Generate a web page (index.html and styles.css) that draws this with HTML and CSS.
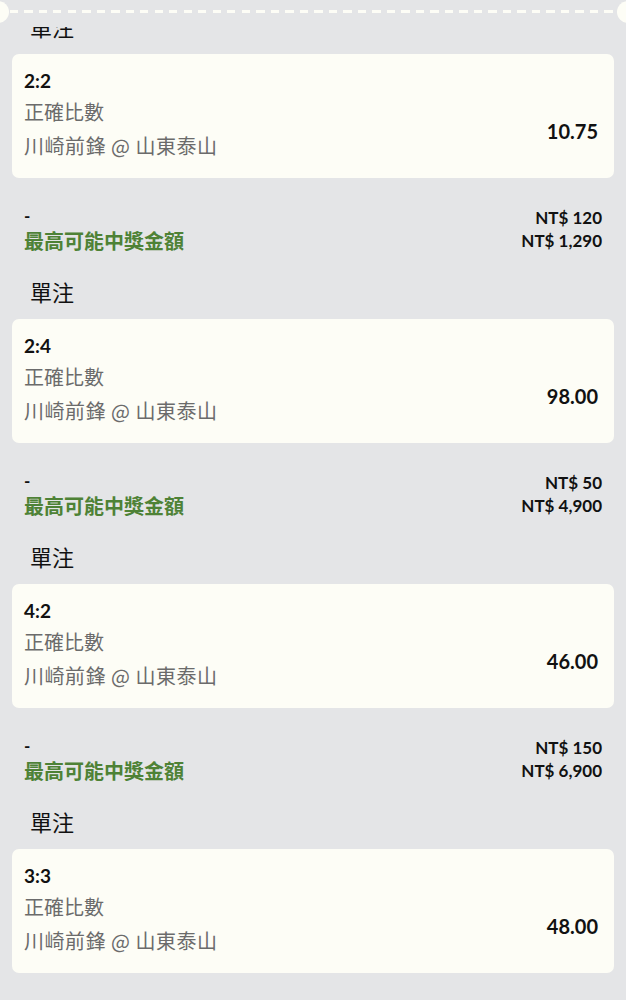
FILE: index.html
```html
<html lang="zh-Hant">
<head>
    <meta charset="UTF-8">
    <meta name="viewport" content="width=device-width, initial-scale=1.0">
    <title>投注單</title>
    <link rel="stylesheet" href="styles.css">
</head>
<body>

<div class="ticket_top">
  <span class="notch notch-left"></span>
  <span class="dash_line"></span>
  <span class="notch notch-right"></span>
</div>

<section class="slip_">
  <div class="bet_type">單注</div>

  <div class="bet-card">
    <div class="score">2:2</div>
    <div class="bet_row">
      <div class="bet_info">
        <div class="market">正確比數</div>
        <div class="teams">川崎前鋒 @ 山東泰山</div>
      </div>
      <div class="odds">10.75</div>
    </div>
  </div>
  <div class="summary">
    <div class="sum_row"><span class="dash">-</span><span class="amount">NT$ 120</span></div>
    <div class="sum_row"><span class="win_label">最高可能中獎金額</span><span class="amount">NT$ 1,290</span></div>
  </div>
  <div class="bet_type">單注</div>

  <div class="bet-card">
    <div class="score">2:4</div>
    <div class="bet_row">
      <div class="bet_info">
        <div class="market">正確比數</div>
        <div class="teams">川崎前鋒 @ 山東泰山</div>
      </div>
      <div class="odds">98.00</div>
    </div>
  </div>
  <div class="summary">
    <div class="sum_row"><span class="dash">-</span><span class="amount">NT$ 50</span></div>
    <div class="sum_row"><span class="win_label">最高可能中獎金額</span><span class="amount">NT$ 4,900</span></div>
  </div>
  <div class="bet_type">單注</div>

  <div class="bet-card">
    <div class="score">4:2</div>
    <div class="bet_row">
      <div class="bet_info">
        <div class="market">正確比數</div>
        <div class="teams">川崎前鋒 @ 山東泰山</div>
      </div>
      <div class="odds">46.00</div>
    </div>
  </div>
  <div class="summary">
    <div class="sum_row"><span class="dash">-</span><span class="amount">NT$ 150</span></div>
    <div class="sum_row"><span class="win_label">最高可能中獎金額</span><span class="amount">NT$ 6,900</span></div>
  </div>
  <div class="bet_type">單注</div>

  <div class="bet-card">
    <div class="score">3:3</div>
    <div class="bet_row">
      <div class="bet_info">
        <div class="market">正確比數</div>
        <div class="teams">川崎前鋒 @ 山東泰山</div>
      </div>
      <div class="odds">48.00</div>
    </div>
  </div>
</section>

</body>
</html>
```

FILE: styles.css
```css
body{
  margin: 0;
  font-family: 'Lato', 'Noto Sans CJK TC', sans-serif;
  background-color: #e4e5e7;
  color: #111;
  overflow-x: hidden;
}

/* ticket edge that stays over the scrolled list */
.ticket_top{
  position: fixed;
  top: 0;
  left: 0;
  right: 0;
  height: 27px;
  background-color: #e4e5e7;
  z-index: 2;
  overflow: hidden;
}
.dash_line{
  position: absolute;
  left: 10px;
  right: 10px;
  top: 10px;
  height: 3px;
  background: repeating-linear-gradient(90deg, #fdfdf6 0 8px, transparent 8px 14.5px);
}
.notch{
  position: absolute;
  top: 1px;
  width: 22px;
  height: 22px;
  border-radius: 50%;
  background-color: #fdfdf6;
}
.notch-left{ left: -13px; }
.notch-right{ right: -13px; }

.slip_{
  padding: 11px 12px 40px;
}

.bet_type{
  font-family: 'Noto Sans CJK TC', sans-serif;
  font-size: 22px;
  line-height: 30px;
  color: #111;
  padding-left: 18px;
  margin-bottom: 13px;
}

.bet-card{
  background-color: #fdfdf6;
  border-radius: 7px;
  padding: 13px 16px 15px 12px;
}
.score{
  font-size: 19px;
  font-weight: 700;
  line-height: 28px;
}
.bet_row{
  display: flex;
  align-items: center;
  justify-content: space-between;
}
.market,
.teams{
  font-family: 'Noto Sans CJK TC', sans-serif;
  font-size: 20px;
  line-height: 34px;
  color: #6b6b6b;
}
.teams{
  letter-spacing: 0.5px;
}
.odds{
  font-size: 20px;
  font-weight: 700;
  padding-top: 4px;
}

.summary{
  margin-top: 28px;
  margin-bottom: 24px;
  padding: 0 12px;
}
.sum_row{
  display: flex;
  justify-content: space-between;
  align-items: center;
  height: 23px;
}
.dash{
  font-size: 17px;
  font-weight: 700;
  margin-top: -4px;
}
.amount{
  font-size: 17px;
  font-weight: 700;
}
.win_label{
  font-family: 'Noto Sans CJK TC', sans-serif;
  font-size: 20px;
  font-weight: 700;
  color: #4e8236;
}
```
